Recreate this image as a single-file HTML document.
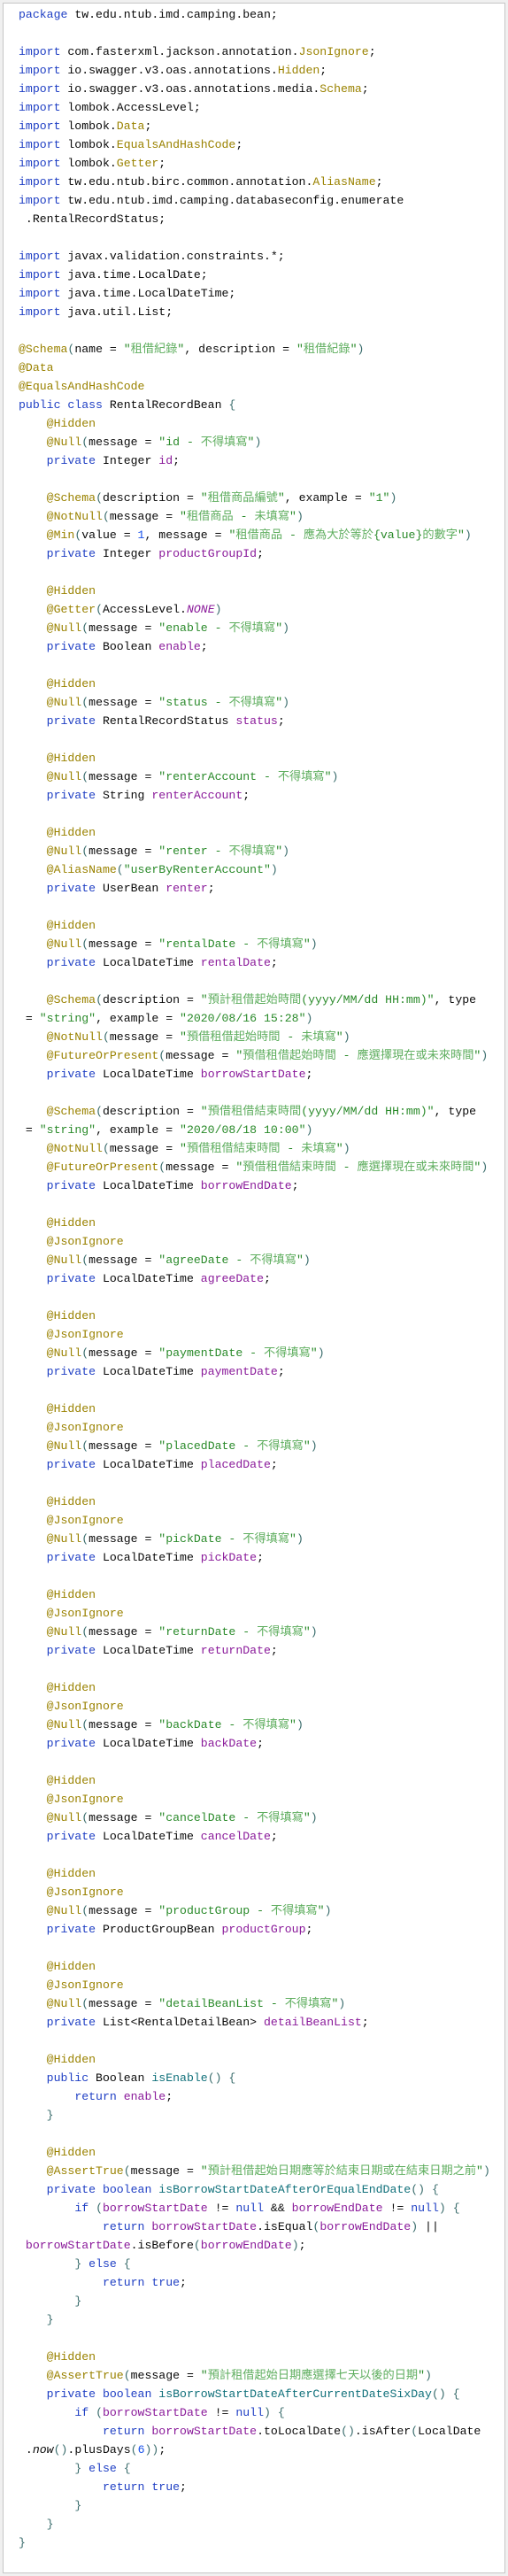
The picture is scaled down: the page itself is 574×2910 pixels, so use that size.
<!DOCTYPE html>
<html><head><meta charset="utf-8">
<style>
html,body{margin:0;padding:0;background:#f0f0f0;}
body{width:574px;height:2910px;position:relative;overflow:hidden;}
.frame{position:absolute;left:3px;top:3px;width:566px;height:2902px;background:#fff;border:1px solid #c6c6c6;}
pre{position:absolute;left:21px;top:6px;margin:0;font-family:"Liberation Mono","Noto Sans CJK TC",monospace;font-size:13.2px;line-height:21px;color:#0a0a0a;white-space:pre;}
pre span{line-height:0;}
.k{color:#1f3fc4}
.a{color:#9a8200}
.s{color:#2a8a2a}
.c{color:#5fae5f;font-family:"Noto Sans CJK TC","Liberation Mono",sans-serif;line-height:0;}
.f{color:#8a1a9a}
.m{color:#10707a}
.p{color:#3b6d6d}
.n{color:#1750eb}
.i{font-style:italic}
</style></head><body>
<div class="frame"></div>
<pre><span class="k">package</span> tw.edu.ntub.imd.camping.bean;

<span class="k">import</span> com.fasterxml.jackson.annotation.<span class="a">JsonIgnore</span>;
<span class="k">import</span> io.swagger.v3.oas.annotations.<span class="a">Hidden</span>;
<span class="k">import</span> io.swagger.v3.oas.annotations.media.<span class="a">Schema</span>;
<span class="k">import</span> lombok.AccessLevel;
<span class="k">import</span> lombok.<span class="a">Data</span>;
<span class="k">import</span> lombok.<span class="a">EqualsAndHashCode</span>;
<span class="k">import</span> lombok.<span class="a">Getter</span>;
<span class="k">import</span> tw.edu.ntub.birc.common.annotation.<span class="a">AliasName</span>;
<span class="k">import</span> tw.edu.ntub.imd.camping.databaseconfig.enumerate
 .RentalRecordStatus;

<span class="k">import</span> javax.validation.constraints.*;
<span class="k">import</span> java.time.LocalDate;
<span class="k">import</span> java.time.LocalDateTime;
<span class="k">import</span> java.util.List;

<span class="a">@Schema</span><span class="p">(</span>name = <span class="s">"<span class="c">租借紀錄</span>"</span>, description = <span class="s">"<span class="c">租借紀錄</span>"</span><span class="p">)</span>
<span class="a">@Data</span>
<span class="a">@EqualsAndHashCode</span>
<span class="k">public class</span> RentalRecordBean <span class="p">{</span>
    <span class="a">@Hidden</span>
    <span class="a">@Null</span><span class="p">(</span>message = <span class="s">"id - <span class="c">不得填寫</span>"</span><span class="p">)</span>
    <span class="k">private</span> Integer <span class="f">id</span>;

    <span class="a">@Schema</span><span class="p">(</span>description = <span class="s">"<span class="c">租借商品編號</span>"</span>, example = <span class="s">"1"</span><span class="p">)</span>
    <span class="a">@NotNull</span><span class="p">(</span>message = <span class="s">"<span class="c">租借商品</span> - <span class="c">未填寫</span>"</span><span class="p">)</span>
    <span class="a">@Min</span><span class="p">(</span>value = <span class="n">1</span>, message = <span class="s">"<span class="c">租借商品</span> - <span class="c">應為大於等於</span>{value}<span class="c">的數字</span>"</span><span class="p">)</span>
    <span class="k">private</span> Integer <span class="f">productGroupId</span>;

    <span class="a">@Hidden</span>
    <span class="a">@Getter</span><span class="p">(</span>AccessLevel.<span class="f i">NONE</span><span class="p">)</span>
    <span class="a">@Null</span><span class="p">(</span>message = <span class="s">"enable - <span class="c">不得填寫</span>"</span><span class="p">)</span>
    <span class="k">private</span> Boolean <span class="f">enable</span>;

    <span class="a">@Hidden</span>
    <span class="a">@Null</span><span class="p">(</span>message = <span class="s">"status - <span class="c">不得填寫</span>"</span><span class="p">)</span>
    <span class="k">private</span> RentalRecordStatus <span class="f">status</span>;

    <span class="a">@Hidden</span>
    <span class="a">@Null</span><span class="p">(</span>message = <span class="s">"renterAccount - <span class="c">不得填寫</span>"</span><span class="p">)</span>
    <span class="k">private</span> String <span class="f">renterAccount</span>;

    <span class="a">@Hidden</span>
    <span class="a">@Null</span><span class="p">(</span>message = <span class="s">"renter - <span class="c">不得填寫</span>"</span><span class="p">)</span>
    <span class="a">@AliasName</span><span class="p">(</span><span class="s">"userByRenterAccount"</span><span class="p">)</span>
    <span class="k">private</span> UserBean <span class="f">renter</span>;

    <span class="a">@Hidden</span>
    <span class="a">@Null</span><span class="p">(</span>message = <span class="s">"rentalDate - <span class="c">不得填寫</span>"</span><span class="p">)</span>
    <span class="k">private</span> LocalDateTime <span class="f">rentalDate</span>;

    <span class="a">@Schema</span><span class="p">(</span>description = <span class="s">"<span class="c">預計租借起始時間</span>(yyyy/MM/dd HH:mm)"</span>, type
 = <span class="s">"string"</span>, example = <span class="s">"2020/08/16 15:28"</span><span class="p">)</span>
    <span class="a">@NotNull</span><span class="p">(</span>message = <span class="s">"<span class="c">預借租借起始時間</span> - <span class="c">未填寫</span>"</span><span class="p">)</span>
    <span class="a">@FutureOrPresent</span><span class="p">(</span>message = <span class="s">"<span class="c">預借租借起始時間</span> - <span class="c">應選擇現在或未來時間</span>"</span><span class="p">)</span>
    <span class="k">private</span> LocalDateTime <span class="f">borrowStartDate</span>;

    <span class="a">@Schema</span><span class="p">(</span>description = <span class="s">"<span class="c">預借租借結束時間</span>(yyyy/MM/dd HH:mm)"</span>, type
 = <span class="s">"string"</span>, example = <span class="s">"2020/08/18 10:00"</span><span class="p">)</span>
    <span class="a">@NotNull</span><span class="p">(</span>message = <span class="s">"<span class="c">預借租借結束時間</span> - <span class="c">未填寫</span>"</span><span class="p">)</span>
    <span class="a">@FutureOrPresent</span><span class="p">(</span>message = <span class="s">"<span class="c">預借租借結束時間</span> - <span class="c">應選擇現在或未來時間</span>"</span><span class="p">)</span>
    <span class="k">private</span> LocalDateTime <span class="f">borrowEndDate</span>;

    <span class="a">@Hidden</span>
    <span class="a">@JsonIgnore</span>
    <span class="a">@Null</span><span class="p">(</span>message = <span class="s">"agreeDate - <span class="c">不得填寫</span>"</span><span class="p">)</span>
    <span class="k">private</span> LocalDateTime <span class="f">agreeDate</span>;

    <span class="a">@Hidden</span>
    <span class="a">@JsonIgnore</span>
    <span class="a">@Null</span><span class="p">(</span>message = <span class="s">"paymentDate - <span class="c">不得填寫</span>"</span><span class="p">)</span>
    <span class="k">private</span> LocalDateTime <span class="f">paymentDate</span>;

    <span class="a">@Hidden</span>
    <span class="a">@JsonIgnore</span>
    <span class="a">@Null</span><span class="p">(</span>message = <span class="s">"placedDate - <span class="c">不得填寫</span>"</span><span class="p">)</span>
    <span class="k">private</span> LocalDateTime <span class="f">placedDate</span>;

    <span class="a">@Hidden</span>
    <span class="a">@JsonIgnore</span>
    <span class="a">@Null</span><span class="p">(</span>message = <span class="s">"pickDate - <span class="c">不得填寫</span>"</span><span class="p">)</span>
    <span class="k">private</span> LocalDateTime <span class="f">pickDate</span>;

    <span class="a">@Hidden</span>
    <span class="a">@JsonIgnore</span>
    <span class="a">@Null</span><span class="p">(</span>message = <span class="s">"returnDate - <span class="c">不得填寫</span>"</span><span class="p">)</span>
    <span class="k">private</span> LocalDateTime <span class="f">returnDate</span>;

    <span class="a">@Hidden</span>
    <span class="a">@JsonIgnore</span>
    <span class="a">@Null</span><span class="p">(</span>message = <span class="s">"backDate - <span class="c">不得填寫</span>"</span><span class="p">)</span>
    <span class="k">private</span> LocalDateTime <span class="f">backDate</span>;

    <span class="a">@Hidden</span>
    <span class="a">@JsonIgnore</span>
    <span class="a">@Null</span><span class="p">(</span>message = <span class="s">"cancelDate - <span class="c">不得填寫</span>"</span><span class="p">)</span>
    <span class="k">private</span> LocalDateTime <span class="f">cancelDate</span>;

    <span class="a">@Hidden</span>
    <span class="a">@JsonIgnore</span>
    <span class="a">@Null</span><span class="p">(</span>message = <span class="s">"productGroup - <span class="c">不得填寫</span>"</span><span class="p">)</span>
    <span class="k">private</span> ProductGroupBean <span class="f">productGroup</span>;

    <span class="a">@Hidden</span>
    <span class="a">@JsonIgnore</span>
    <span class="a">@Null</span><span class="p">(</span>message = <span class="s">"detailBeanList - <span class="c">不得填寫</span>"</span><span class="p">)</span>
    <span class="k">private</span> List&lt;RentalDetailBean&gt; <span class="f">detailBeanList</span>;

    <span class="a">@Hidden</span>
    <span class="k">public</span> Boolean <span class="m">isEnable</span><span class="p">() {</span>
        <span class="k">return</span> <span class="f">enable</span>;
    <span class="p">}</span>

    <span class="a">@Hidden</span>
    <span class="a">@AssertTrue</span><span class="p">(</span>message = <span class="s">"<span class="c">預計租借起始日期應等於結束日期或在結束日期之前</span>"</span><span class="p">)</span>
    <span class="k">private boolean</span> <span class="m">isBorrowStartDateAfterOrEqualEndDate</span><span class="p">() {</span>
        <span class="k">if</span> <span class="p">(</span><span class="f">borrowStartDate</span> != <span class="k">null</span> &amp;&amp; <span class="f">borrowEndDate</span> != <span class="k">null</span><span class="p">) {</span>
            <span class="k">return</span> <span class="f">borrowStartDate</span>.isEqual<span class="p">(</span><span class="f">borrowEndDate</span><span class="p">)</span> ||
 <span class="f">borrowStartDate</span>.isBefore<span class="p">(</span><span class="f">borrowEndDate</span><span class="p">)</span>;
        <span class="p">}</span> <span class="k">else</span> <span class="p">{</span>
            <span class="k">return true</span>;
        <span class="p">}</span>
    <span class="p">}</span>

    <span class="a">@Hidden</span>
    <span class="a">@AssertTrue</span><span class="p">(</span>message = <span class="s">"<span class="c">預計租借起始日期應選擇七天以後的日期</span>"</span><span class="p">)</span>
    <span class="k">private boolean</span> <span class="m">isBorrowStartDateAfterCurrentDateSixDay</span><span class="p">() {</span>
        <span class="k">if</span> <span class="p">(</span><span class="f">borrowStartDate</span> != <span class="k">null</span><span class="p">) {</span>
            <span class="k">return</span> <span class="f">borrowStartDate</span>.toLocalDate<span class="p">()</span>.isAfter<span class="p">(</span>LocalDate
 .<span class="i">now</span><span class="p">()</span>.plusDays<span class="p">(</span><span class="n">6</span><span class="p">))</span>;
        <span class="p">}</span> <span class="k">else</span> <span class="p">{</span>
            <span class="k">return true</span>;
        <span class="p">}</span>
    <span class="p">}</span>
<span class="p">}</span>
</pre>
</body></html>
